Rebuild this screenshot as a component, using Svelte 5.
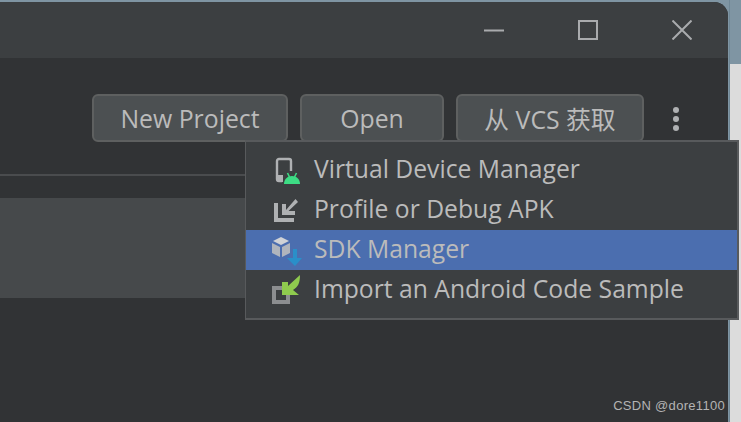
<script lang="ts">
  const buttons = ['New Project', 'Open', '从 VCS 获取'];
</script>

<div class="screen">
  <div class="window">
    <header class="titlebar">
      <svg class="win-icon" viewBox="0 0 20 20" aria-hidden="true"><path d="M0 10.5H20" /></svg>
      <svg class="win-icon" viewBox="0 0 20 20" aria-hidden="true"><rect x="1" y="1" width="18" height="18" /></svg>
      <svg class="win-icon" viewBox="0 0 20 20" aria-hidden="true"><path d="M0.5 0.5L19.5 19.5M19.5 0.5L0.5 19.5" /></svg>
    </header>

    <div class="actions">
      {#each buttons as label}
        <button class="action" type="button">{label}</button>
      {/each}
      <div class="more" aria-hidden="true"><span></span><span></span><span></span></div>
    </div>

    <div class="rule"></div>
    <div class="project-row"></div>
  </div>
  <div class="desktop">
    <div class="desktop-top"></div>
    <div class="desktop-bottom"></div>
  </div>

  <div class="menu">
    <div class="item">
      <svg viewBox="0 0 32 32" aria-hidden="true">
        <path d="M12 27H9a2 2 0 0 1-2-2V7a2 2 0 0 1 2-2h10a2 2 0 0 1 2 2v10" fill="none" stroke="#afb1b3" stroke-width="2.4" />
        <path d="M7 21h6v7H9a2 2 0 0 1-2-2z" fill="#afb1b3" />
        <path d="M14 30c0-5 3.500-8 8-8s8 3 8 8z" fill="#3ddc84" />
        <path d="M17.500 19l2 4M26.500 19l-2 4" stroke="#3ddc84" stroke-width="1.600" />
      </svg>
      <span>Virtual Device Manager</span>
    </div>
    <div class="item">
      <svg viewBox="0 0 32 32" aria-hidden="true">
        <path d="M4 9h4v15h16v4H4z" fill="#afb1b3" />
        <path d="M12 10h4v6L25.500 5 28 8 18.500 17H25v4H12z" fill="#afb1b3" />
      </svg>
      <span>Profile or Debug APK</span>
    </div>
    <div class="item selected">
      <svg viewBox="0 0 32 32" aria-hidden="true">
        <path d="M11 3l8 4-8 4-8-4z" fill="#cfd2d6" />
        <path d="M2 9l8 4v10l-8-4z" fill="#afb5bd" />
        <path d="M12 13l8-4v10l-8 4z" fill="#afb5bd" />
        <path d="M23 15h4v9h5l-7 8-8-8h6z" fill="#2a8fc9" />
      </svg>
      <span>SDK Manager</span>
    </div>
    <div class="item">
      <svg viewBox="0 0 32 32" aria-hidden="true">
        <path d="M14 14H4v14h14v-8" fill="none" stroke="#8c8e90" stroke-width="4" />
        <path d="M12 8h6v4L30 1c0 8-2 12-7 15l6 5H12z" fill="#8fcb4e" />
      </svg>
      <span>Import an Android Code Sample</span>
    </div>
  </div>

  <div class="watermark">CSDN @dore1100</div>
</div>

<style>
  :global(body) { margin: 0; background: #313335; }

  .screen {
    position: relative;
    width: 741px;
    height: 422px;
    overflow: hidden;
    display: flex;
    font-family: "Open Sans", "Noto Sans CJK SC", sans-serif;
    background: #7f95a3;
  }

  .window {
    width: 728px;
    height: 420px;
    margin-top: 2px;
    background: #313335;
    border-top-right-radius: 14px;
    display: flex;
    flex-direction: column;
    overflow: hidden;
    flex-shrink: 0;
  }

  .titlebar {
    height: 56px;
    flex-shrink: 0;
    background: #3c3f41;
    display: flex;
    justify-content: flex-end;
    align-items: center;
    gap: 74px;
    padding: 0 36px 0 0;
    box-sizing: border-box;
  }
  .win-icon { width: 20px; height: 20px; fill: none; stroke: #a9abad; stroke-width: 2; }

  .actions {
    margin-top: 36px;
    height: 48px;
    display: flex;
    justify-content: flex-end;
    gap: 12px;
    padding-right: 84px;
    position: relative;
  }
  .action {
    height: 48px;
    width: 196px;
    padding: 0;
    background: #4c5052;
    border: 2px solid #5e6060;
    border-radius: 6px;
    color: #bbbbbb;
    font-family: inherit;
    font-size: 24.8px;
  }
  .action:nth-child(2) { width: 144px; }
  .action:nth-child(3) { width: 188px; }

  .more {
    position: absolute;
    right: 49px;
    top: 13px;
    display: flex;
    flex-direction: column;
    gap: 3px;
  }
  .more span { width: 6px; height: 6px; border-radius: 50%; background: #afb1b3; }

  .rule { height: 2px; margin-top: 32px; background: #4a4c4e; flex-shrink: 0; }
  .project-row { height: 100px; margin-top: 22px; background: #46494b; flex-shrink: 0; }

  .desktop { flex: 1; display: flex; flex-direction: column; border-left: 1px solid #6f8796; margin-left: 1px; }
  .desktop-top { height: 64px; background: #7f95a3; }
  .desktop-bottom { flex: 1; background: #dcdcdc; }

  .menu {
    position: absolute;
    left: 245px;
    top: 140px;
    width: 494px;
    height: 180px;
    box-sizing: border-box;
    padding: 8px 0;
    background: #3c3f41;
    border: 2px solid #585a5c;
    border-left-width: 1px;
  }
  .item {
    height: 40px;
    display: flex;
    align-items: center;
    gap: 12px;
    padding-left: 24px;
    color: #bbbbbb;
    font-size: 24.7px;
  }
  .item span { margin-bottom: 4px; }
  .item svg { width: 32px; height: 32px; flex-shrink: 0; }
  .item.selected { background: #4b6eaf; }

  .watermark {
    position: absolute;
    right: 16px;
    bottom: 9px;
    color: #b4b4b4;
    font-family: "Liberation Sans", sans-serif;
    font-size: 13px;
    letter-spacing: 0.3px;
  }
</style>
